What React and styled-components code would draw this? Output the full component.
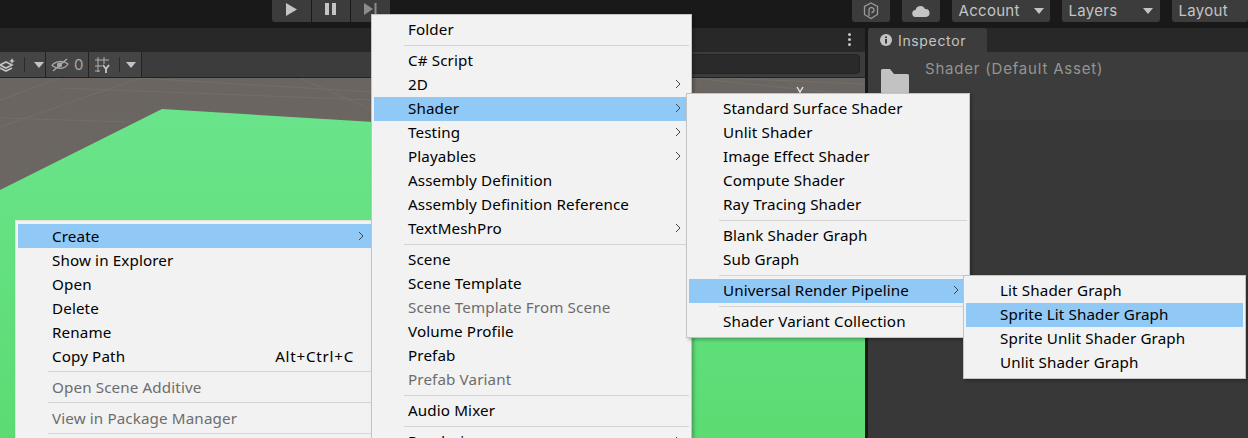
import styled, { createGlobalStyle } from "styled-components";

const Global = createGlobalStyle`
  html, body { margin: 0; padding: 0; background: #191919; }
`;

const Page = styled.div`
  position: relative;
  width: 1248px;
  height: 438px;
  overflow: hidden;
  background: #191919;
  font-family: "Inter", "Liberation Sans", sans-serif;
`;

const TopBar = styled.div`
  display: flex;
  height: 28px;
  padding-left: 272px;
  align-items: flex-start;
`;

const PlayGroup = styled.div`
  display: flex;
  gap: 1px;
  border-radius: 0 0 3px 3px;
  overflow: hidden;
  margin-right: 462px;
`;

const PlayButton = styled.div`
  width: 38.5px;
  height: 22px;
  background: #3c3c3c;
  display: flex;
  align-items: flex-start;
  justify-content: center;
  padding-top: 3px;
  box-sizing: border-box;
`;

const TopButton = styled.div`
  flex: none;
  width: ${(p) => p.$w}px;
  height: 22px;
  margin-right: ${(p) => p.$gap || 0}px;
  padding: 0 0 1px ${(p) => p.$pad || 0}px;
  box-sizing: border-box;
  background: #3c3c3c;
  border-radius: 0 0 3px 3px;
  display: flex;
  align-items: center;
  justify-content: ${(p) => (p.$center ? "center" : "flex-start")};
  color: #c4c4c4;
  font-size: 15px;
  letter-spacing: 0.3px;
`;

const DownCaret = styled.span`
  width: 0;
  height: 0;
  border-left: 5px solid transparent;
  border-right: 5px solid transparent;
  border-top: 6px solid #c4c4c4;
  margin-left: ${(p) => p.$ml || 0}px;
`;

const Main = styled.div`
  display: flex;
  gap: 3px;
  height: 410px;
`;

const ScenePanel = styled.div`
  width: 865px;
  display: flex;
  flex-direction: column;
`;

const TabRow = styled.div`
  height: 24px;
  background: #282828;
  display: flex;
  justify-content: flex-end;
  padding: 5px 14px 0 0;
  box-sizing: border-box;
`;

const Dots = styled.div`
  display: flex;
  flex-direction: column;
  gap: 2px;
  span {
    width: 3px;
    height: 3px;
    border-radius: 50%;
    background: #c4c4c4;
  }
`;

const SceneTools = styled.div`
  height: 26px;
  flex: none;
  box-sizing: border-box;
  background: #3c3c3c;
  border-bottom: 1px solid #232323;
  display: flex;
  align-items: stretch;
`;

const ToolGroup = styled.div`
  width: ${(p) => p.$w}px;
  flex: none;
  box-sizing: border-box;
  background: #454545;
  border-right: 1px solid #232323;
  display: flex;
  align-items: center;
  color: #a8a8a8;
  font-size: 15px;
  overflow: hidden;
`;

const ToolSep = styled.span`
  width: 1px;
  height: 15px;
  background: #2c2c2c;
`;

const SearchField = styled.div`
  margin: 2px 5px 3px auto;
  width: 300px;
  background: #2a2a2a;
  border: 1px solid #232323;
  border-radius: 4px;
  box-sizing: border-box;
`;

const SceneView = styled.div`
  flex: 1;
  background: #6b6661;
  min-height: 0;
  svg {
    display: block;
  }
`;

const InspectorPanel = styled.div`
  flex: 1;
  display: flex;
  flex-direction: column;
  background: #383838;
`;

const InspectorTabs = styled.div`
  height: 24px;
  background: #282828;
  display: flex;
`;

const InspectorTab = styled.div`
  width: 119px;
  background: #3c3c3c;
  border-radius: 3px 3px 0 0;
  display: flex;
  align-items: center;
  gap: 6px;
  padding-left: 12px;
  box-sizing: border-box;
  color: #c4c4c4;
  font-size: 14px;
  letter-spacing: 0.65px;
`;

const AssetHeader = styled.div`
  height: 68px;
  background: #3c3c3c;
  display: flex;
  align-items: flex-start;
  padding: 16px 0 0 12px;
  box-sizing: border-box;
  gap: 15px;
`;

const AssetTitle = styled.div`
  color: #949494;
  font-size: 15px;
  letter-spacing: 0.8px;
  line-height: 1;
  margin-top: -8px;
  padding-top: 1px;
`;

const Row = styled.div`
  height: 24px;
  box-sizing: border-box;
  display: flex;
  align-items: center;
  padding: 0 8px 2px 34px;
  white-space: nowrap;
  line-height: 22px;
  background: ${(p) => (p.$active ? "#90c8f6" : "transparent")};
  color: ${(p) => (p.$disabled ? "#6d6d6d" : "#000")};
`;

const Menu = styled.div`
  position: absolute;
  left: ${(p) => p.$left}px;
  top: ${(p) => p.$top}px;
  width: ${(p) => p.$width}px;
  box-sizing: border-box;
  padding: 3px 2px;
  background: #f2f2f2;
  border: 1px solid ${(p) => p.$edge || "#c4c4c4"};
  box-shadow: 2px 2px 3px rgba(0, 0, 0, 0.25);
  font-family: "Noto Sans", "Open Sans", sans-serif;
  font-size: 15.2px;
  letter-spacing: 0.12px;
  color: #000;
  ${Row} {
    padding-bottom: ${(p) => (p.$lowText ? 0 : 2)}px;
  }
`;

const Label = styled.span`
  flex: 1;
`;

const Shortcut = styled.span`
  padding-right: 10px;
  letter-spacing: 0.75px;
`;

const Sep = styled.div`
  height: 7px;
  margin-left: 30px;
  display: flex;
  align-items: center;
  &::after {
    content: "";
    flex: 1;
    height: 1px;
    background: #d4d4d4;
  }
`;

function Chevron() {
  return (
    <svg width="6" height="10" viewBox="0 0 6 10">
      <path d="M1 1l4 4-4 4" fill="none" stroke="#444" strokeWidth="1" />
    </svg>
  );
}

function Item({ children, arrow, shortcut, active, disabled }) {
  return (
    <Row $active={active} $disabled={disabled}>
      <Label>{children}</Label>
      {shortcut && <Shortcut>{shortcut}</Shortcut>}
      {arrow && <Chevron />}
    </Row>
  );
}

function SceneCanvas() {
  return (
    <svg width="865" height="360" viewBox="0 78 865 360">
      <defs>
        <linearGradient id="floor" x1="0" y1="0" x2="0" y2="1">
          <stop offset="0" stopColor="#6a6560" />
          <stop offset="1" stopColor="#6f6a65" />
        </linearGradient>
        <linearGradient id="plane" x1="0" y1="0" x2="0" y2="1">
          <stop offset="0" stopColor="#6ae48b" />
          <stop offset="1" stopColor="#5cdb72" />
        </linearGradient>
      </defs>
      <rect x="0" y="78" width="865" height="360" fill="url(#floor)" />
      <g stroke="#736e69" strokeWidth="1" fill="none">
        <path d="M0 127L140 78M0 100L60 78M0 118L130 122M60 88L372 100M140 78L372 92M300 78L372 110" />
        <path d="M692 78L865 96M720 78L865 84M760 110L865 102" />
      </g>
      <polygon points="162,109 865,152 865,438 0,438 0,190" fill="url(#plane)" />
      <path d="M797 87l3 5 3-5M800 92v4" stroke="#e8e8e8" strokeWidth="1.4" fill="none" />
    </svg>
  );
}

function LayersIcon() {
  return (
    <svg width="16" height="16" viewBox="0 0 16 16" style={{ marginRight: 8 }}>
      <path d="M0 8l6-3 6 3-6 3zM0 11l6 3 6-3" fill="none" stroke="#c4c4c4" strokeWidth="1.6" />
      <path d="M12 1l1 2.2 2 .8-2 .8-1 2.2-1-2.2-2-.8 2-.8z" fill="#c4c4c4" />
    </svg>
  );
}

function EyeOffIcon() {
  return (
    <svg width="18" height="16" viewBox="0 0 18 16" style={{ margin: "0 5px 0 5px" }}>
      <path d="M1 8.5C4 4 12 3 17 7c-3 5-10 6-16 1.500z" fill="none" stroke="#a8a8a8" strokeWidth="1.3" />
      <circle cx="8.500" cy="8" r="2.500" fill="#a8a8a8" />
      <path d="M2 14L16 2" stroke="#a8a8a8" strokeWidth="1.5" />
    </svg>
  );
}

function GridIcon() {
  return (
    <svg width="17" height="18" viewBox="0 0 17 18" style={{ margin: "0 8px 0 5px" }}>
      <path d="M4 1v15M10 1v7M1 4h14M1 10h7M1 15h5" stroke="#b0b0b0" strokeWidth="1" fill="none" />
      <path d="M9 9l3 4 3-4M12 13v4" stroke="#c4c4c4" strokeWidth="1.800" fill="none" />
    </svg>
  );
}

function PackageIcon() {
  return (
    <svg width="16" height="18" viewBox="0 0 16 18">
      <path d="M8 1l6.500 3.500v8L8 16.500 1.500 12.500v-8z" fill="none" stroke="#9a9a9a" strokeWidth="1.300" />
      <path d="M6 14V7.500a2.500 2.500 0 1 1 2.500 3" fill="none" stroke="#9a9a9a" strokeWidth="1.300" />
    </svg>
  );
}

function CloudIcon() {
  return (
    <svg width="18" height="12" viewBox="0 0 18 12">
      <path d="M4 12a3.500 3.500 0 0 1-.5-7A5 5 0 0 1 13 4a4 4 0 0 1 1 8z" fill="#c4c4c4" />
    </svg>
  );
}

function FolderIcon() {
  return (
    <svg width="30" height="26" viewBox="0 0 30 26">
      <path d="M1 2.500Q1 1 2.500 1h7.500l4 5h13.500Q29 6 29 7.500V24q0 1.500-1.500 1.500h-25Q1 25.500 1 24z" fill="#c2c2c2" />
    </svg>
  );
}

function InfoIcon() {
  return (
    <svg width="12" height="12" viewBox="0 0 12 12">
      <circle cx="6" cy="6" r="6" fill="#c4c4c4" />
      <rect x="5" y="5" width="2" height="4.500" fill="#3c3c3c" />
      <rect x="5" y="2.500" width="2" height="1.600" fill="#3c3c3c" />
    </svg>
  );
}

export default function App() {
  return (
    <Page>
      <Global />
      <TopBar>
        <PlayGroup>
          <PlayButton>
            <svg width="11" height="13" viewBox="0 0 11 13">
              <path d="M0 0l11 6.500L0 13z" fill="#c4c4c4" />
            </svg>
          </PlayButton>
          <PlayButton>
            <svg width="11" height="12" viewBox="0 0 11 12">
              <path d="M0 0h4v12H0zM7 0h4v12H7z" fill="#c4c4c4" />
            </svg>
          </PlayButton>
          <PlayButton>
            <svg width="13" height="12" viewBox="0 0 13 12">
              <path d="M0 0l9 6-9 6z" fill="#8c8c8c" />
              <path d="M10.500 0h2v12h-2z" fill="#8c8c8c" />
            </svg>
          </PlayButton>
        </PlayGroup>
        <TopButton $w={38} $gap={12} $center>
          <PackageIcon />
        </TopButton>
        <TopButton $w={38} $gap={12} $center>
          <CloudIcon />
        </TopButton>
        <TopButton $w={98} $gap={12} $pad={7}>
          Account
          <DownCaret $ml={14} />
        </TopButton>
        <TopButton $w={98} $gap={12} $pad={7}>
          Layers
          <DownCaret $ml={26} />
        </TopButton>
        <TopButton $w={76} $pad={7}>
          Layout
        </TopButton>
      </TopBar>

      <Main>
        <ScenePanel>
          <TabRow>
            <Dots>
              <span />
              <span />
              <span />
            </Dots>
          </TabRow>
          <SceneTools>
            <ToolGroup $w={46}>
              <LayersIcon />
              <ToolSep />
              <DownCaret $ml={9} />
            </ToolGroup>
            <ToolGroup $w={43}>
              <EyeOffIcon />0
            </ToolGroup>
            <ToolGroup $w={53}>
              <GridIcon />
              <ToolSep />
              <DownCaret $ml={6} />
            </ToolGroup>
            <SearchField />
          </SceneTools>
          <SceneView>
            <SceneCanvas />
          </SceneView>
        </ScenePanel>

        <InspectorPanel>
          <InspectorTabs>
            <InspectorTab>
              <InfoIcon />
              Inspector
            </InspectorTab>
          </InspectorTabs>
          <AssetHeader>
            <FolderIcon />
            <AssetTitle>Shader (Default Asset)</AssetTitle>
          </AssetHeader>
        </InspectorPanel>
      </Main>

      <Menu $left={15} $top={220} $width={360} $edge="#e4e4e4" $lowText>
        <Item active arrow>Create</Item>
        <Item>Show in Explorer</Item>
        <Item>Open</Item>
        <Item>Delete</Item>
        <Item>Rename</Item>
        <Item shortcut="Alt+Ctrl+C">Copy Path</Item>
        <Sep />
        <Item disabled>Open Scene Additive</Item>
        <Sep />
        <Item disabled>View in Package Manager</Item>
        <Sep />
      </Menu>

      <Menu $left={371} $top={14} $width={321}>
        <Item>Folder</Item>
        <Sep />
        <Item>C# Script</Item>
        <Item arrow>2D</Item>
        <Item active arrow>Shader</Item>
        <Item arrow>Testing</Item>
        <Item arrow>Playables</Item>
        <Item>Assembly Definition</Item>
        <Item>Assembly Definition Reference</Item>
        <Item arrow>TextMeshPro</Item>
        <Sep />
        <Item>Scene</Item>
        <Item>Scene Template</Item>
        <Item disabled>Scene Template From Scene</Item>
        <Item>Volume Profile</Item>
        <Item>Prefab</Item>
        <Item disabled>Prefab Variant</Item>
        <Sep />
        <Item>Audio Mixer</Item>
        <Sep />
        <Item arrow>Rendering</Item>
      </Menu>

      <Menu $left={686} $top={93} $width={284}>
        <Item>Standard Surface Shader</Item>
        <Item>Unlit Shader</Item>
        <Item>Image Effect Shader</Item>
        <Item>Compute Shader</Item>
        <Item>Ray Tracing Shader</Item>
        <Sep />
        <Item>Blank Shader Graph</Item>
        <Item>Sub Graph</Item>
        <Sep />
        <Item active arrow>Universal Render Pipeline</Item>
        <Sep />
        <Item>Shader Variant Collection</Item>
      </Menu>

      <Menu $left={963} $top={275} $width={283}>
        <Item>Lit Shader Graph</Item>
        <Item active>Sprite Lit Shader Graph</Item>
        <Item>Sprite Unlit Shader Graph</Item>
        <Item>Unlit Shader Graph</Item>
      </Menu>
    </Page>
  );
}
